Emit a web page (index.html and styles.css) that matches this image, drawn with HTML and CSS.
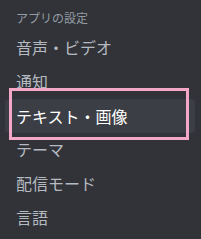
FILE: index.html
```html
<!DOCTYPE html>
<html lang="ja">
<head>
    <meta charset="UTF-8">
    <title>アプリの設定</title>
    <link rel="stylesheet" href="styles.css">
</head>
<body>
    <div class="sidebar">
        <div class="section-title">アプリの設定</div>
        <div class="item">音声・ビデオ</div>
        <div class="item">通知</div>
        <div class="item selected">テキスト・画像</div>
        <div class="item">テーマ</div>
        <div class="item">配信モード</div>
        <div class="item">言語</div>

        <!-- annotation frame -->
        <div class="highlight-frame"></div>
    </div>
</body>
</html>
```

FILE: styles.css
```css
body {
    margin: 0;
    background-color: #313338;
    font-family: "Noto Sans CJK JP", "Noto Sans", sans-serif;
}

.sidebar {
    position: relative;
    padding: 10px 6px 0 5px;
}

.section-title {
    font-size: 12px;
    line-height: 16px;
    color: #949ba4;
    padding-left: 11px;
    margin-bottom: 5px;
}

.item {
    height: 32px;
    line-height: 32px;
    margin-bottom: 2px;
    padding-left: 11px;
    font-size: 16px;
    color: #b5bac1;
    border-radius: 4px;
}

.item.selected {
    height: 34px;
    line-height: 34px;
    margin-bottom: 0;
    background-color: #3c3e45;
    color: #ffffff;
}

.highlight-frame {
    position: absolute;
    left: 9px;
    top: 88px;
    width: 174px;
    height: 46px;
    border: 3px solid #f4a7c6;
}
```
